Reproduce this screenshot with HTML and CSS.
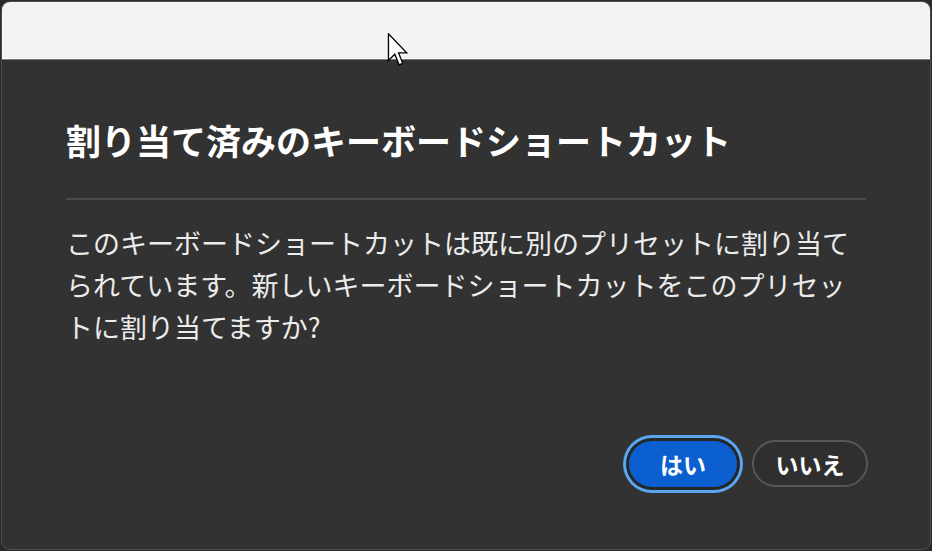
FILE: index.html
```html
<!DOCTYPE html>
<html lang="ja">
<head>
<meta charset="utf-8">
<link rel="stylesheet" href="styles.css">
</head>
<body>
<div class="window">
  <div class="titlebar"></div>
  <div class="content">
    <h1 class="title">割り当て済みのキーボードショートカット</h1>
    <div class="divider"></div>
    <p class="message">このキーボードショートカットは既に別のプリセットに割り当てられています。新しいキーボードショートカットをこのプリセットに割り当てますか?</p>
    <div class="actions">
      <button class="btn btn-primary">はい</button>
      <button class="btn btn-secondary">いいえ</button>
    </div>
  </div>
</div>
<svg class="cursor" width="22" height="34" viewBox="0 0 12.5 20.5">
  <path d="M0.5 0.5 L0.5 16.5 L4.3 12.8 L6.9 19.2 L9.1 18.3 L6.6 12 L11.5 12 Z" fill="#fff" stroke="#000" stroke-width="0.8" stroke-linejoin="miter"/>
</svg>
</body>
</html>
```
FILE: styles.css
```css
html, body {
  margin: 0;
  padding: 0;
}
body {
  width: 932px;
  height: 551px;
  background: #2a2a2a;
  overflow: hidden;
  position: relative;
  font-family: "Noto Sans CJK JP", "Noto Sans", sans-serif;
}
.window {
  box-sizing: border-box;
  margin: 1px;
  width: 930px;
  height: 549px;
  border: 1px solid #4e4e4e;
  border-radius: 9px;
  overflow: hidden;
  background: #323232;
  display: flex;
  flex-direction: column;
}
.titlebar {
  height: 56px;
  flex: none;
  background: #f3f3f3;
  border-bottom: 1px solid #ffffff;
  box-shadow: 0 1px 0 #7a7a7a;
}
.content {
  padding: 0 64px;
  display: flex;
  flex-direction: column;
}
.title {
  margin: 57px 0 0;
  font-size: 35px;
  line-height: 48px;
  font-weight: 700;
  color: #ffffff;
  white-space: nowrap;
}
.divider {
  margin-top: 34px;
  height: 2px;
  background: #4a4a4a;
}
.message {
  margin: 22px 0 0;
  font-size: 27px;
  line-height: 42px;
  color: #ececec;
  font-weight: 400;
  line-break: strict;
}
.actions {
  margin-top: 92px;
  margin-right: -2px;
  display: flex;
  justify-content: flex-end;
  align-items: center;
  gap: 15px;
}
.btn {
  font-family: "Noto Sans CJK JP", "Noto Sans", sans-serif;
  font-weight: 700;
  font-size: 23px;
  color: #ffffff;
  border-radius: 24px;
  padding: 0;
  display: flex;
  align-items: center;
  justify-content: center;
  cursor: default;
}
.btn-primary {
  width: 108px;
  height: 46px;
  border: none;
  background: #0b5fcf;
  box-shadow: 0 0 0 3px #262626, 0 0 0 6px #5aa6f2;
}
.btn-secondary {
  width: 116px;
  height: 47px;
  background: #2f2f2f;
  border: 2px solid #575757;
}
.cursor {
  position: absolute;
  left: 387px;
  top: 33px;
}
```
